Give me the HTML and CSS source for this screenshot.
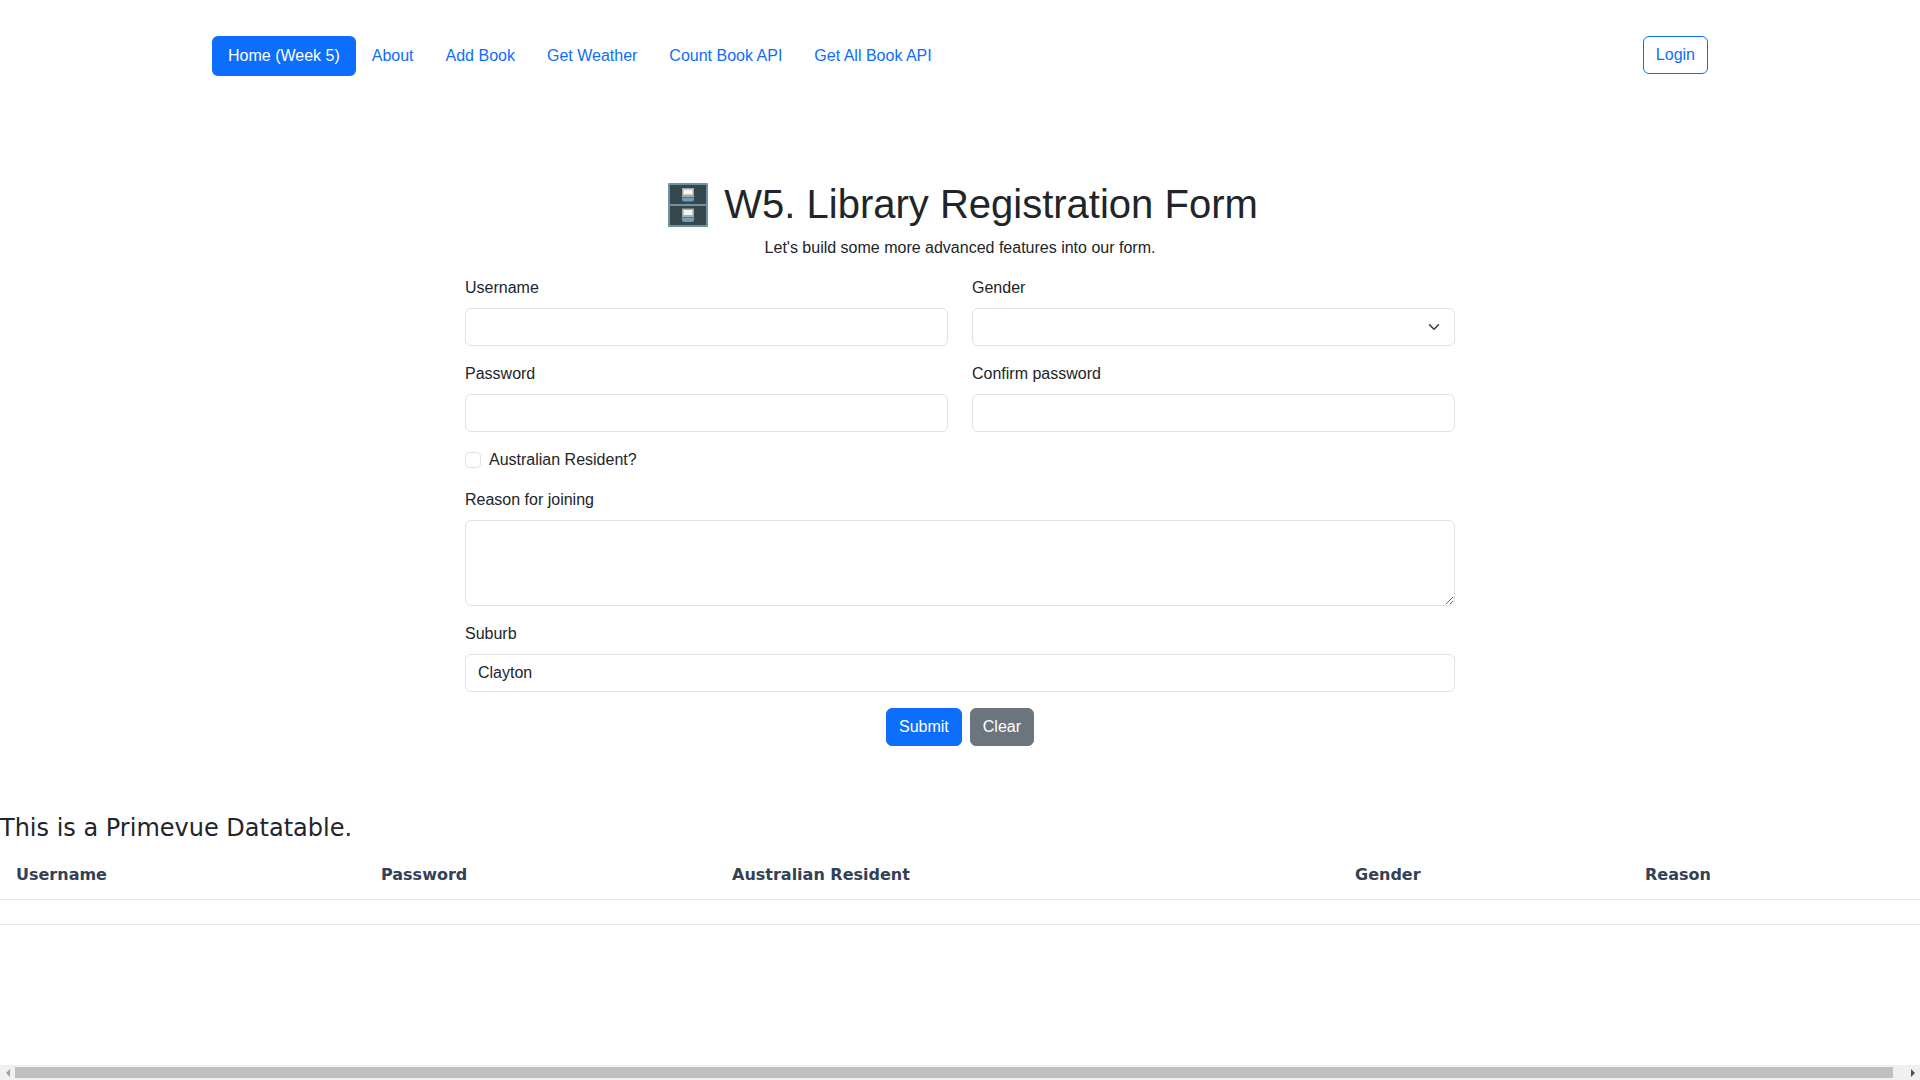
FILE: index.html
```html
<!DOCTYPE html>
<html lang="en">
<head>
<meta charset="utf-8">
<title>W5. Library Registration Form</title>
<link rel="stylesheet" href="styles.css">
</head>
<body>
<div class="page">
  <div class="content">
    <header class="topbar">
      <nav class="nav">
        <a class="nav-link active" href="#">Home (Week 5)</a>
        <a class="nav-link" href="#">About</a>
        <a class="nav-link" href="#">Add Book</a>
        <a class="nav-link" href="#">Get Weather</a>
        <a class="nav-link" href="#">Count Book API</a>
        <a class="nav-link" href="#">Get All Book API</a>
      </nav>
      <button class="btn btn-outline" type="button">Login</button>
    </header>
    <main class="form-wrap">
      <h1 class="title"><svg class="cabinet" viewBox="0 0 40 44" aria-hidden="true">
        <rect x="0" y="0" width="40" height="44" rx="1" fill="#6f929f"/>
        <rect x="2" y="2" width="36" height="19" fill="#37474f"/>
        <rect x="2" y="23" width="36" height="19" fill="#37474f"/>
        <rect x="14" y="5" width="12" height="9" fill="#a9a9a9"/>
        <rect x="15.5" y="6.5" width="9" height="5" fill="#f4f4f4"/>
        <path d="M14 14.5h12v1.5a2.5 2.5 0 0 1-2.5 2.5h-7a2.5 2.5 0 0 1-2.5-2.5z" fill="#6f9fb2"/>
        <rect x="14" y="25.5" width="12" height="9" fill="#a9a9a9"/>
        <rect x="15.5" y="27" width="9" height="5" fill="#f4f4f4"/>
        <path d="M14 35h12v1.5a2.5 2.5 0 0 1-2.5 2.5h-7a2.5 2.5 0 0 1-2.5-2.5z" fill="#6f9fb2"/>
      </svg> W5. Library Registration Form</h1>
      <p class="lead">Let's build some more advanced features into our form.</p>
      <form class="form">
        <div class="row">
          <div class="field"><label class="label" for="u">Username</label><input class="control" id="u" type="text"></div>
          <div class="field"><label class="label" for="g">Gender</label>
            <div class="select-box" id="g"><svg class="chev" viewBox="0 0 16 16" aria-hidden="true"><path d="m2 5 6 6 6-6" fill="none" stroke="#343a40" stroke-width="2" stroke-linecap="round" stroke-linejoin="round"/></svg></div></div>
        </div>
        <div class="row">
          <div class="field"><label class="label" for="p">Password</label><input class="control" id="p" type="password"></div>
          <div class="field"><label class="label" for="c">Confirm password</label><input class="control" id="c" type="password"></div>
        </div>
        <div class="check"><span class="box"></span><label class="check-label">Australian Resident?</label></div>
        <div class="field block"><label class="label" for="r">Reason for joining</label><textarea class="control area" id="r"></textarea></div>
        <div class="field block"><label class="label" for="s">Suburb</label><input class="control" id="s" type="text" value="Clayton"></div>
        <div class="actions">
          <button class="btn btn-primary" type="button">Submit</button>
          <button class="btn btn-secondary" type="button">Clear</button>
        </div>
      </form>
    </main>
    <section class="table-section">
      <h2 class="table-title">This is a Primevue Datatable.</h2>
      <table class="table">
        <colgroup><col class="c1"><col class="c2"><col class="c3"><col class="c4"><col class="c5"></colgroup>
        <thead><tr><th>Username</th><th>Password</th><th>Australian Resident</th><th>Gender</th><th>Reason</th></tr></thead>
        <tbody><tr><td colspan="5"></td></tr></tbody>
      </table>
    </section>
  </div>
  <div class="scrollbar">
    <span class="arrow left"></span>
    <span class="thumb"></span>
    <span class="arrow right"></span>
  </div>
</div>
</body>
</html>
```
FILE: styles.css
```css
* { box-sizing: border-box; }
html, body { margin: 0; height: 100%; }
body {
  font-family: "Liberation Sans", Arial, sans-serif;
  font-size: 16px;
  line-height: 24px;
  color: #212529;
  background: #fff;
}
.page { height: 1080px; display: flex; flex-direction: column; overflow: hidden; }
.content { flex: 1; min-height: 0; }

.topbar {
  display: flex;
  justify-content: space-between;
  align-items: flex-start;
  padding: 36px 212px 0 212px;
}
.nav { display: flex; }
.nav-link {
  display: block;
  padding: 8px 16px;
  color: #0d6efd;
  text-decoration: none;
  border-radius: 6px;
}
.nav-link.active { background: #0d6efd; color: #fff; }

.btn {
  font: inherit;
  height: 38px;
  padding: 6px 12px;
  border-radius: 6px;
  border: 1px solid transparent;
  background: transparent;
}
.btn-outline { color: #0d6efd; border-color: #0d6efd; }
.btn-primary { color: #fff; background: #0d6efd; border-color: #0d6efd; }
.btn-secondary { color: #fff; background: #6c757d; border-color: #6c757d; }

.form-wrap { width: 990px; margin: 104px auto 0; }
.title {
  margin: 0;
  font-size: 40px;
  line-height: 48px;
  font-weight: 400;
  text-align: center;
  white-space: nowrap;
}
.cabinet { width: 40px; height: 44px; vertical-align: -9px; margin: 0 5px 0 6px; }
.lead { margin: 8px 0 16px; text-align: center; }

.row { display: grid; grid-template-columns: 1fr 1fr; gap: 24px; margin-bottom: 16px; }
.field { display: flex; flex-direction: column; }
.field.block { margin-bottom: 16px; }
.label { margin-bottom: 8px; }
.control {
  font: inherit;
  color: #212529;
  height: 38px;
  padding: 6px 12px;
  border: 1px solid #dee2e6;
  border-radius: 6px;
  background: #fff;
  outline: 0;
  width: 100%;
}
.area { height: 86px; display: block; resize: vertical; }
.select-box {
  height: 38px;
  border: 1px solid #dee2e6;
  border-radius: 6px;
  display: flex;
  align-items: center;
  justify-content: flex-end;
  padding-right: 12px;
}
.chev { width: 16px; height: 12px; }

.check { display: flex; align-items: center; gap: 8px; margin-bottom: 16px; }
.box { width: 16px; height: 16px; border: 1px solid #dee2e6; border-radius: 4px; }

.actions { display: flex; justify-content: center; gap: 8px; }

.table-section { margin-top: 64px; }
.table-title {
  margin: 0 0 1px;
  font-family: "DejaVu Sans", sans-serif;
  font-size: 24px;
  line-height: 36px;
  font-weight: 400;
}
.table {
  width: 100%;
  table-layout: fixed;
  border-collapse: collapse;
  font-family: "DejaVu Sans", sans-serif;
}
.c1 { width: 365px; }
.c2 { width: 351px; }
.c3 { width: 623px; }
.c4 { width: 290px; }
.c5 { width: 291px; }
.table th {
  text-align: left;
  padding: 16px 16px 12px;
  font-weight: 700;
  color: #334155;
  border-bottom: 1px solid #e2e8f0;
}
.table td { height: 25px; padding: 0; border-bottom: 1px solid #e2e8f0; }

.scrollbar {
  height: 15px;
  flex: none;
  display: flex;
  align-items: stretch;
  background: #f0f0f0;
}
.thumb { flex: 1; margin: 2px 0; background: #bfbfbf; }
.arrow { width: 15px; flex: none; display: flex; align-items: center; justify-content: center; }
.arrow::before { content: ""; border-style: solid; border-color: transparent; }
.arrow.left::before { border-width: 4px 4px 4px 0; border-right-color: #a3a3a3; }
.arrow.right { width: 27px; }
.arrow.right::before { border-width: 4px 0 4px 4px; border-left-color: #505050; margin-left: 12px; }
```
